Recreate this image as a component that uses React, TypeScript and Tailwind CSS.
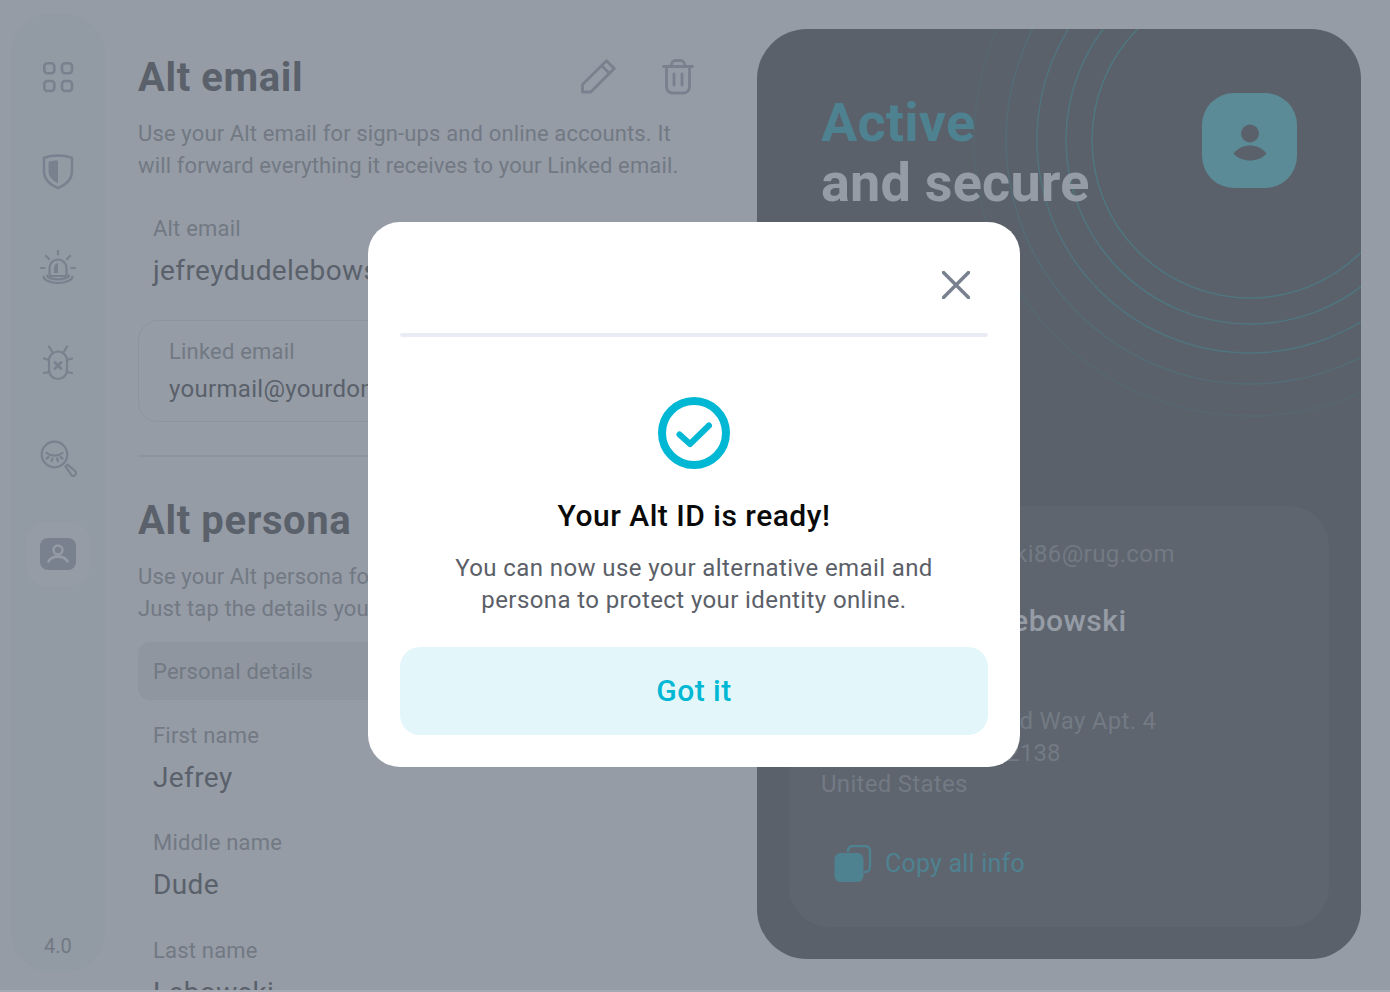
const font = { fontFamily: "Roboto, sans-serif" };

function GridIcon() {
  return (
    <svg width="32" height="32" viewBox="0 0 32 32" fill="none" stroke="#78818d" strokeWidth="2.6">
      <rect x="2.3" y="2.3" width="10" height="10" rx="3" />
      <rect x="20" y="2.3" width="10" height="10" rx="3" />
      <rect x="2.3" y="20" width="10" height="10" rx="3" />
      <rect x="20" y="20" width="10" height="10" rx="3" />
    </svg>
  );
}
function ShieldIcon() {
  return (
    <svg width="32" height="36" viewBox="0 0 32 36" fill="none">
      <path d="M16 1.5c5 0 10 .8 14 2.3v14c0 7.6-6 12.8-14 16.4C8 30.6 2 25.4 2 17.8v-14C6 2.3 11 1.500 16 1.500Z" stroke="#78818d" strokeWidth="2.4" strokeLinejoin="round" />
      <path d="M16 6.500v22.800C10.500 26.500 6.500 22.800 6.500 17.500V7.800c3-.8 6.200-1.300 9.500-1.300Z" fill="#78818d" />
    </svg>
  );
}
function AlarmIcon() {
  return (
    <svg className="translate-y-[1px]" width="36" height="36" viewBox="0 0 36 36" fill="none" stroke="#78818d" strokeWidth="2.2" strokeLinecap="round">
      <path d="M18 1v3.500M6 6l3 3M30 6l-3 3M1 18h3.500M31.500 18H35" />
      <path d="M9.500 26v-8a8.500 8.500 0 0 1 17 0v8Z" strokeLinejoin="round" />
      <path d="M3.500 26.500c0 3.300 6.500 6.500 14.500 6.500s14.500-3.200 14.500-6.500M7 25.500c0 2 5 3.800 11 3.800s11-1.800 11-3.800" />
      <path d="M18 13v10h-4v-5c0-2.500 1.500-4.500 4-5Z" fill="#78818d" stroke="none" />
    </svg>
  );
}
function BugIcon() {
  return (
    <svg width="32" height="36" viewBox="0 0 32 36" fill="none" stroke="#78818d" strokeWidth="2.2" strokeLinecap="round">
      <rect x="7" y="6.500" width="18" height="27.500" rx="9" />
      <path d="M10 6.500 7 1.500M22 6.500l3-5M7 15l-5-1.500M25 15l5-1.500M7 27l-5 1M25 27l5 1" />
      <path d="M13 17.500l6 6M19 17.500l-6 6" strokeWidth="2.800" />
    </svg>
  );
}
function LensIcon() {
  return (
    <svg width="37" height="37" viewBox="0 0 37 37" fill="none" stroke="#78818d" strokeWidth="2.2" strokeLinecap="round">
      <circle cx="14.500" cy="14.500" r="12.800" />
      <path d="M6.500 13c4.500 3.500 11.500 3.500 16 0M8.500 17l-2 1.500M12.500 18.500l-1 2.500M17 18.500l1 2.500M20.500 17l2 1.500" />
      <path d="M25.500 26.500l2-2 7.500 6.500a2.200 2.200 0 0 1-3.500 4.200Z" strokeLinejoin="round" />
    </svg>
  );
}
function ProfileIcon() {
  return (
    <svg width="36" height="32" viewBox="0 0 36 32" fill="none">
      <rect width="36" height="32" rx="8" fill="#78818d" />
      <circle cx="18" cy="12" r="4.500" stroke="#959ca6" strokeWidth="2.400" />
      <path d="M8.500 23.500c3-6.500 16-6.500 19 0" stroke="#959ca6" strokeWidth="2.600" strokeLinecap="round" />
    </svg>
  );
}
function PencilIcon() {
  return (
    <svg width="36" height="36" viewBox="0 0 36 36" fill="none" stroke="#78818d" strokeWidth="2.800" strokeLinejoin="round" strokeLinecap="round">
      <path d="M26.500 1.800 34.200 9.500 10.800 33H2.500v-7.500Z" />
      <path d="M22 7l7.500 7.500" />
    </svg>
  );
}
function TrashIcon() {
  return (
    <svg width="32" height="36" viewBox="0 0 32 36" fill="none" stroke="#78818d" strokeWidth="2.800" strokeLinecap="round" strokeLinejoin="round">
      <path d="M1.500 7.500h29M9.500 7V5.500a4 4 0 0 1 4-4h5a4 4 0 0 1 4 4V7M4.500 8v20a6 6 0 0 0 6 6h11a6 6 0 0 0 6-6V8M12 15v11M20 15v11" />
    </svg>
  );
}
function CopyIcon() {
  return (
    <svg width="38" height="38" viewBox="0 0 38 38" fill="none">
      <path d="M14 7V6a5 5 0 0 1 5-5h12a5 5 0 0 1 5 5v16a5 5 0 0 1-5 5h-1" stroke="#4f8290" strokeWidth="2.400" />
      <rect x="0.500" y="8" width="29" height="29" rx="6" fill="#4f8290" />
    </svg>
  );
}

function Field({ label, value, className }: { label: string; value: string; className: string }) {
  return (
    <div className={className}>
      <div className="text-[22px] leading-8 tracking-[0.2px] text-[#727983] whitespace-nowrap">{label}</div>
      <div className="mt-[10px] text-[28px] leading-8 tracking-[0.4px] text-[#5a616b] whitespace-nowrap">{value}</div>
    </div>
  );
}

function Desc({ children, className = "" }: { children: React.ReactNode; className?: string }) {
  return <p className={`text-[22px] leading-8 tracking-[0.14px] text-[#727983] whitespace-nowrap ${className}`}>{children}</p>;
}

export default function App() {
  return (
    <div style={font} className="relative h-[992px] w-[1390px] overflow-hidden bg-[#a3aab4]">
      <div className="flex h-[990px] overflow-hidden bg-[#959ca6]">
        <aside className="ml-[11px] mt-[14px] flex h-[958px] w-[94px] shrink-0 flex-col items-center rounded-[40px] bg-[#929aa4] pt-[15px]">
          {[<GridIcon />, <ShieldIcon />, <AlarmIcon />, <BugIcon />, <LensIcon />].map((icon, i) => (
            <div key={i} className="flex h-[95.4px] w-full items-center justify-center">{icon}</div>
          ))}
          <div className="mt-[16px] flex h-16 w-16 items-center justify-center rounded-[20px] bg-[#959ca6]">
            <ProfileIcon />
          </div>
          <div className="mt-auto pb-[14px] text-[20px] leading-6 text-[#727983]">4.0</div>
        </aside>

        <main className="ml-[33px] w-[556px] shrink-0 pt-[53px]">
          <div className="flex h-12 items-center justify-between">
            <h1 className="pt-[2px] text-[40px] font-bold leading-[48px] tracking-[0.6px] text-[#5a616b]">Alt email</h1>
            <div className="flex items-center gap-[46px]">
              <PencilIcon />
              <TrashIcon />
            </div>
          </div>
          <Desc className="mt-[17px]">Use your Alt email for sign-ups and online accounts. It<br />will forward everything it receives to your Linked email.</Desc>
          <Field label="Alt email" value="jefreydudelebowski86@rug.com" className="ml-[15px] mt-[31px]" />
          <div className="mt-[33px] h-[102px] rounded-[20px] border border-[#8d949e] px-[30px] pt-[15px]">
            <div className="text-[22px] leading-8 tracking-[0.2px] text-[#727983]">Linked email</div>
            <div className="mt-[5px] text-[24px] leading-8 tracking-[0.3px] text-[#5a616b] whitespace-nowrap">yourmail@yourdomain.com</div>
          </div>
          <div className="mt-[33px] h-[2px] bg-[#8d949e]" />
          <h2 className="mt-[40px] text-[40px] font-bold leading-[48px] tracking-[0.6px] text-[#5a616b]">Alt persona</h2>
          <Desc className="mt-[16px]">Use your Alt persona for sign-ups and online forms.<br />Just tap the details you need to copy them.</Desc>
          <div className="mt-[17px] flex h-[58px] items-center rounded-[12px] bg-[#8f96a0] px-[15px] text-[22px] tracking-[0.2px] text-[#727983]">Personal details</div>
          <Field label="First name" value="Jefrey" className="ml-[15px] mt-[20px]" />
          <Field label="Middle name" value="Dude" className="ml-[15px] mt-[33px]" />
          <Field label="Last name" value="Lebowski" className="ml-[15px] mt-[34px]" />
        </main>

        <section className="relative ml-[63px] mt-[29px] flex h-[930px] w-[604px] shrink-0 flex-col overflow-hidden rounded-[50px] bg-[#5a616b] px-8">
          <svg className="absolute left-0 top-0" width="604" height="930" viewBox="0 0 604 930" fill="none" stroke="#4f7780" strokeWidth="1.500">
            <circle cx="493" cy="111" r="158" />
            <circle cx="493" cy="111" r="184" opacity="0.95" />
            <circle cx="493" cy="111" r="213" opacity="0.85" />
            <circle cx="493" cy="111" r="244" opacity="0.55" />
            <circle cx="493" cy="111" r="276" opacity="0.3" />
          </svg>
          <div className="relative flex items-start justify-between pl-8 pr-8 pt-[64px]">
            <div className="text-[54px] font-bold leading-[60px] tracking-[0.2px]">
              <div className="text-[#4f8290]">Active</div>
              <div className="text-[#959ca6]">and secure</div>
            </div>
            <div className="flex h-[95px] w-[95px] items-center justify-center rounded-[32px] bg-[#5b8b97]">
              <svg width="36" height="40" viewBox="0 0 36 40" fill="#5a616b">
                <circle cx="18" cy="12.500" r="9" />
                <path d="M1.500 32.500C6 27 12 24.500 18 24.500S30 27 34.500 32.500C30 37.500 24 39.500 18 39.500S6 37.500 1.500 32.500Z" />
              </svg>
            </div>
          </div>
          <div className="relative mt-[293px] h-[421px] rounded-[40px] bg-[#5e656f] px-8 pt-[32px]">
            <div className="text-[24px] leading-8 tracking-[0.4px] text-[#737a84] whitespace-nowrap">jefreydudelebowski86@rug.com</div>
            <div className="mt-[33px] text-[30px] font-medium leading-[36px] tracking-[0.5px] text-[#959ca6] whitespace-nowrap">Jefrey Dude Lebowski</div>
            <div className="mt-[67px] text-[24px] leading-[31.5px] tracking-[0.3px] text-[#737a84] whitespace-nowrap">
              100 W Maple Wood Way Apt. 4<br /><span className="tracking-[0.1px]">Cambridge, MA 02138</span><br />United States
            </div>
            <div className="ml-[13px] mt-[44px] flex items-center gap-[13px]">
              <CopyIcon />
              <span className="text-[25px] leading-8 tracking-[0.2px] text-[#4f8290]">Copy all info</span>
            </div>
          </div>
        </section>
      </div>

      <div className="absolute left-[368px] top-[222px] h-[545px] w-[652px] rounded-[32px] bg-white px-8">
        <div className="flex h-[111px] items-end justify-end pb-[34px] pr-[18px]">
          <svg width="28" height="28" viewBox="0 0 28 28" fill="none" stroke="#78818d" strokeWidth="3.500" strokeLinecap="round">
            <path d="M1.500 1.500l25 25M26.500 1.500l-25 25" />
          </svg>
        </div>
        <div className="h-1 rounded-full bg-[#e9ecf3]" />
        <div className="flex flex-col items-center">
          <svg className="mt-[60px]" width="72" height="72" viewBox="0 0 72 72" fill="none" stroke="#00b7d4">
            <circle cx="36" cy="36" r="32" strokeWidth="8" />
            <path d="M21.500 37.500 32 47l19-18.500" strokeWidth="6" strokeLinecap="round" strokeLinejoin="round" />
          </svg>
          <h3 className="mt-[27px] text-[30px] font-medium leading-[40px] tracking-[0.5px] text-[#0a0a0a]">Your Alt ID is ready!</h3>
          <p className="mt-[16px] text-center text-[24px] leading-8 tracking-[0.4px] text-[#5b6068]">
            You can now use your alternative email and<br />persona to protect your identity online.
          </p>
          <div className="mt-[31px] flex h-[88px] w-full items-center justify-center rounded-[20px] bg-[#e3f7fb] pb-[2px] text-[30px] font-medium tracking-[0.5px] text-[#00b7d4]">Got it</div>
        </div>
      </div>
    </div>
  );
}
